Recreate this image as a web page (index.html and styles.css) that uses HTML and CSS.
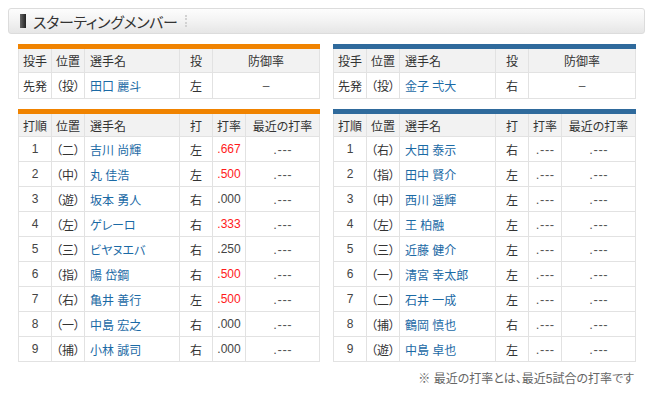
FILE: index.html
```html
<!DOCTYPE html>
<html lang="ja">
<head>
<meta charset="utf-8">
<title>スターティングメンバー</title>
<link rel="stylesheet" href="styles.css">
</head>
<body>
<div class="page">
  <div class="titlebar">
    <span class="mark"></span>
    <h2 class="title">スターティングメンバー</h2>
    <span class="sep"></span>
  </div>
  <div class="teams">
    <div class="team home">
      <table class="tbl pitcher">
        <colgroup><col class="c-s"><col class="c-s"><col><col class="c-s"><col class="c-era"></colgroup>
        <tr class="head"><th>投手</th><th>位置</th><th class="l">選手名</th><th>投</th><th>防御率</th></tr>
        <tr><td>先発</td><td>（投）</td><td class="l name">田口 麗斗</td><td>左</td><td class="dash">–</td></tr>
      </table>
      <table class="tbl order">
        <colgroup><col class="c-s"><col class="c-s"><col><col class="c-s"><col class="c-s"><col class="c-rec"></colgroup>
        <tr class="head"><th>打順</th><th>位置</th><th class="l">選手名</th><th>打</th><th>打率</th><th>最近の打率</th></tr>
        <tr><td class="n">1</td><td>（二）</td><td class="l name">吉川 尚輝</td><td>左</td><td class="n hot">.667</td><td class="n g">.---</td></tr>
        <tr><td class="n">2</td><td>（中）</td><td class="l name">丸 佳浩</td><td>左</td><td class="n hot">.500</td><td class="n g">.---</td></tr>
        <tr><td class="n">3</td><td>（遊）</td><td class="l name">坂本 勇人</td><td>右</td><td class="n">.000</td><td class="n g">.---</td></tr>
        <tr><td class="n">4</td><td>（左）</td><td class="l name">ゲレーロ</td><td>右</td><td class="n hot">.333</td><td class="n g">.---</td></tr>
        <tr><td class="n">5</td><td>（三）</td><td class="l name">ビヤヌエバ</td><td>右</td><td class="n">.250</td><td class="n g">.---</td></tr>
        <tr><td class="n">6</td><td>（指）</td><td class="l name">陽 岱鋼</td><td>右</td><td class="n hot">.500</td><td class="n g">.---</td></tr>
        <tr><td class="n">7</td><td>（右）</td><td class="l name">亀井 善行</td><td>左</td><td class="n hot">.500</td><td class="n g">.---</td></tr>
        <tr><td class="n">8</td><td>（一）</td><td class="l name">中島 宏之</td><td>右</td><td class="n">.000</td><td class="n g">.---</td></tr>
        <tr><td class="n">9</td><td>（捕）</td><td class="l name">小林 誠司</td><td>右</td><td class="n">.000</td><td class="n g">.---</td></tr>
      </table>
    </div>
    <div class="team away">
      <table class="tbl pitcher">
        <colgroup><col class="c-s"><col class="c-s"><col><col class="c-s"><col class="c-era"></colgroup>
        <tr class="head"><th>投手</th><th>位置</th><th class="l">選手名</th><th>投</th><th>防御率</th></tr>
        <tr><td>先発</td><td>（投）</td><td class="l name">金子 弌大</td><td>右</td><td class="dash">–</td></tr>
      </table>
      <table class="tbl order">
        <colgroup><col class="c-s"><col class="c-s"><col><col class="c-s"><col class="c-s"><col class="c-rec"></colgroup>
        <tr class="head"><th>打順</th><th>位置</th><th class="l">選手名</th><th>打</th><th>打率</th><th>最近の打率</th></tr>
        <tr><td class="n">1</td><td>（右）</td><td class="l name">大田 泰示</td><td>右</td><td class="n g">.---</td><td class="n g">.---</td></tr>
        <tr><td class="n">2</td><td>（指）</td><td class="l name">田中 賢介</td><td>左</td><td class="n g">.---</td><td class="n g">.---</td></tr>
        <tr><td class="n">3</td><td>（中）</td><td class="l name">西川 遥輝</td><td>左</td><td class="n g">.---</td><td class="n g">.---</td></tr>
        <tr><td class="n">4</td><td>（左）</td><td class="l name">王 柏融</td><td>左</td><td class="n g">.---</td><td class="n g">.---</td></tr>
        <tr><td class="n">5</td><td>（三）</td><td class="l name">近藤 健介</td><td>左</td><td class="n g">.---</td><td class="n g">.---</td></tr>
        <tr><td class="n">6</td><td>（一）</td><td class="l name">清宮 幸太郎</td><td>左</td><td class="n g">.---</td><td class="n g">.---</td></tr>
        <tr><td class="n">7</td><td>（二）</td><td class="l name">石井 一成</td><td>左</td><td class="n g">.---</td><td class="n g">.---</td></tr>
        <tr><td class="n">8</td><td>（捕）</td><td class="l name">鶴岡 慎也</td><td>右</td><td class="n g">.---</td><td class="n g">.---</td></tr>
        <tr><td class="n">9</td><td>（遊）</td><td class="l name">中島 卓也</td><td>左</td><td class="n g">.---</td><td class="n g">.---</td></tr>
      </table>
    </div>
  </div>
  <p class="note">※ 最近の打率とは、最近5試合の打率です</p>
</div>
</body>
</html>
```

FILE: styles.css
```css
* { box-sizing: border-box; }
html, body { margin: 0; padding: 0; background: #fff; }
body {
  font-family: "Liberation Sans", "Noto Sans CJK JP", sans-serif;
  font-size: 12px;
  color: #333;
  font-feature-settings: "palt";
}
.page { padding: 8px 5px 0 8px; }

.titlebar {
  display: flex;
  align-items: center;
  height: 26px;
  border: 1px solid #dcdcdc;
  border-radius: 3px;
  background: linear-gradient(#fdfdfd 0%, #f4f4f4 45%, #e6e6e6 100%);
  padding-left: 11px;
}
.mark {
  width: 6px;
  height: 14px;
  background: linear-gradient(90deg, #666, #222);
}
.title {
  margin: 0 0 0 7px;
  font-family: "Noto Sans CJK JP", sans-serif;
  font-weight: normal;
  font-size: 15px;
  color: #333;
  letter-spacing: -0.3px;
  line-height: 1;
}
.sep {
  margin-left: 7px;
  width: 0;
  height: 12px;
  border-left: 2px dotted #d2d2d2;
}

.teams {
  display: grid;
  grid-template-columns: 302px 303px;
  column-gap: 13px;
  padding: 10px 0 0 10px;
}
.team { display: flex; flex-direction: column; gap: 10px; }

.tbl {
  width: 100%;
  border-collapse: collapse;
  table-layout: fixed;
}
.home .tbl { border-top: 5px solid #f08300; }
.away .tbl { border-top: 5px solid #2f6a9c; }
.tbl th, .tbl td {
  border: 1px solid #e2e2e2;
  height: 25px;
  padding: 0;
  text-align: center;
  font-weight: normal;
  white-space: nowrap;
  overflow: hidden;
}
.pitcher th, .pitcher td { height: 26px; }
.tbl .head th { background: #f2f2f2; color: #333; }
.tbl .l { text-align: left; padding-left: 5px; }
.c-s { width: 33px; }
.c-era { width: 107px; }
.c-rec { width: 74px; }
.name { color: #1b6aa5; }
.n { font-family: "Liberation Sans", sans-serif; font-size: 12px; color: #444; }
.hot { color: #ff1a1a; }
.g { color: #555; font-size: 13px; letter-spacing: 0.6px; text-indent: 0.6px; }
.dash { color: #555; font-family: "Liberation Sans", sans-serif; }

.note {
  margin: 7px 11px 0 0;
  text-align: right;
  color: #666;
  font-size: 12px;
}
```
